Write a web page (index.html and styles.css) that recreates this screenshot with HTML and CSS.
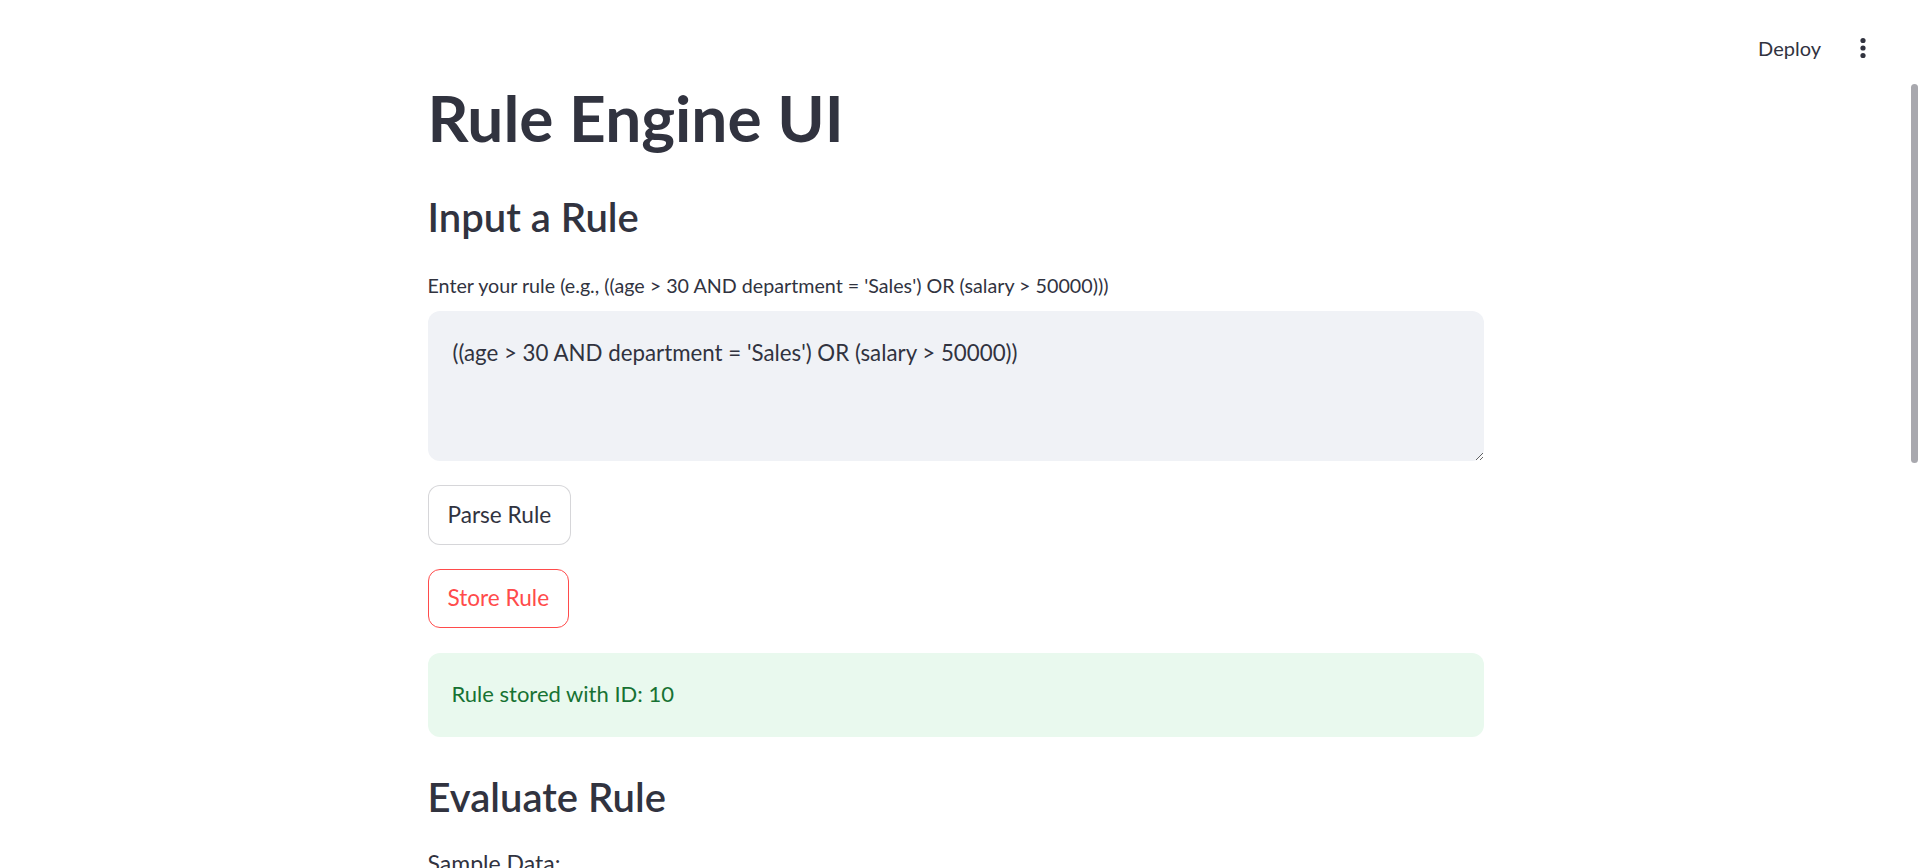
FILE: index.html
```html
<!DOCTYPE html>
<html lang="en">
<head>
<meta charset="utf-8">
<title>Rule Engine UI</title>
<link rel="stylesheet" href="styles.css">
</head>
<body>
<div class="app">
  <div class="main">
    <header class="topbar">
      <span class="deploy">Deploy</span>
      <svg class="kebab" width="8" height="24" viewBox="0 0 8 24" aria-hidden="true">
        <circle cx="4" cy="4.5" r="2.6" fill="#31333f"/>
        <circle cx="4" cy="12" r="2.6" fill="#31333f"/>
        <circle cx="4" cy="19.5" r="2.6" fill="#31333f"/>
      </svg>
    </header>
    <div class="block">
      <h1 class="title">Rule Engine UI</h1>
      <h3 class="subheader first">Input a Rule</h3>
      <label class="label" for="rule">Enter your rule (e.g., ((age &gt; 30 AND department = 'Sales') OR (salary &gt; 50000)))</label>
      <textarea id="rule" class="textarea">((age &gt; 30 AND department = 'Sales') OR (salary &gt; 50000))</textarea>
      <div class="buttons">
        <button class="btn">Parse Rule</button>
        <button class="btn btn-active">Store Rule</button>
      </div>
      <div class="alert-success">Rule stored with ID: 10</div>
      <h3 class="subheader second">Evaluate Rule</h3>
      <p class="text">Sample Data:</p>
    </div>
  </div>
  <div class="scrolltrack"><div class="thumb"></div></div>
</div>
</body>
</html>
```
FILE: styles.css
```css
* { box-sizing: border-box; }
html, body { margin: 0; padding: 0; height: 100%; }
body {
  background: #ffffff;
  color: #31333f;
  font-family: Lato, "Liberation Sans", sans-serif;
  overflow: hidden;
}
.app {
  display: flex;
  height: 868px;
  width: 1918px;
}
.main {
  flex: 1;
  min-width: 0;
  display: flex;
  flex-direction: column;
}
.topbar {
  display: flex;
  justify-content: flex-end;
  align-items: flex-start;
  padding: 36px 44px 0 0;
  height: 60px;
}
.deploy {
  font-size: 20px;
  line-height: 24px;
  color: #31333f;
  margin-right: 38px;
}
.kebab { display: block; }
.block {
  width: 1056px;
  margin: 0 auto;
  display: flex;
  flex-direction: column;
  align-items: flex-start;
}
.title {
  margin: 20px 0 0 0;
  font-size: 64px;
  font-weight: 700;
  line-height: 1.2;
  color: #31333f;
}
.subheader {
  margin: 0;
  font-size: 40px;
  font-weight: 600;
  line-height: 1.2;
  color: #31333f;
}
.subheader.first { margin-top: 36px; }
.subheader.second { margin-top: 36px; }
.label {
  margin-top: 33px;
  font-size: 19.7px;
  line-height: 24px;
  color: #31333f;
}
.textarea {
  margin-top: 13px;
  width: 100%;
  height: 150px;
  border: 0;
  border-radius: 12px;
  background: #f0f2f6;
  color: #31333f;
  font-family: Lato, "Liberation Sans", sans-serif;
  font-size: 22.3px;
  line-height: 1.45;
  padding: 26px 24px 24px 25px;
  resize: vertical;
  outline: none;
}
.buttons {
  display: flex;
  flex-direction: column;
  align-items: flex-start;
  gap: 24px;
  margin-top: 24px;
}
.btn {
  height: 60px;
  padding: 0 19px;
  border: 1px solid rgba(49, 51, 63, 0.2);
  border-radius: 12px;
  background: #ffffff;
  color: #31333f;
  font-family: Lato, "Liberation Sans", sans-serif;
  font-size: 22.6px;
  line-height: 1.4;
  display: inline-flex;
  align-items: center;
}
.btn-active {
  height: 59px;
  border-color: #ff4b4b;
  color: #ff4b4b;
}
.alert-success {
  margin-top: 25px;
  width: 100%;
  height: 84px;
  display: flex;
  align-items: center;
  padding: 0 24px;
  border-radius: 12px;
  background: #e9f9ee;
  color: #177233;
  font-size: 22px;
  line-height: 1.4;
}
.text {
  margin: 24px 0 0 0;
  font-size: 23px;
  line-height: 1.6;
  color: #31333f;
}
.scrolltrack {
  width: 7px;
  flex: none;
}
.thumb {
  margin-top: 84px;
  height: 379px;
  width: 7px;
  border-radius: 4px;
  background: #a8a8ae;
}
```
